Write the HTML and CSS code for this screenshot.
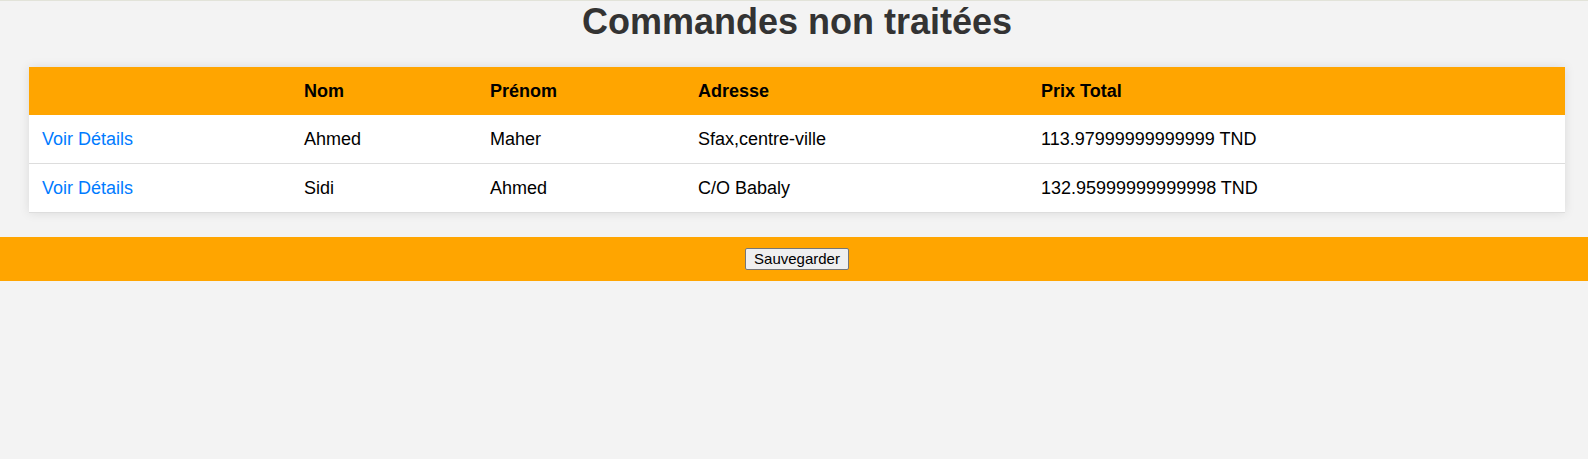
FILE: index.html
```html
<!DOCTYPE html>
<html lang="fr">
<head>
<meta charset="utf-8">
<title>Commandes non traitées</title>
<link rel="stylesheet" href="styles.css">
</head>
<body>
<main class="content">
  <h1 class="page-title">Commandes non traitées</h1>
  <table class="orders">
    <colgroup>
      <col class="c-link">
      <col class="c-nom">
      <col class="c-prenom">
      <col class="c-adresse">
      <col class="c-prix">
    </colgroup>
    <thead>
      <tr>
        <th></th>
        <th>Nom</th>
        <th>Prénom</th>
        <th>Adresse</th>
        <th>Prix Total</th>
      </tr>
    </thead>
    <tbody>
      <tr>
        <td><a class="details" href="#">Voir Détails</a></td>
        <td>Ahmed</td>
        <td>Maher</td>
        <td>Sfax,centre-ville</td>
        <td>113.97999999999999 TND</td>
      </tr>
      <tr>
        <td><a class="details" href="#">Voir Détails</a></td>
        <td>Sidi</td>
        <td>Ahmed</td>
        <td>C/O Babaly</td>
        <td>132.95999999999998 TND</td>
      </tr>
    </tbody>
  </table>
</main>
<div class="save-bar">
  <button class="save-btn" type="button">Sauvegarder</button>
</div>
</body>
</html>
```

FILE: styles.css
```css
html, body {
  margin: 0;
  padding: 0;
}

body {
  background: #f3f3f3;
  border-top: 1px solid #e2e3d9;
  font-family: "Liberation Sans", Arial, sans-serif;
  color: #000;
}

.content {
  display: block;
  margin: 0 23px 24px 29px;
}

.page-title {
  margin: 0 0 25px;
  font-size: 36px;
  line-height: 41px;
  font-weight: bold;
  text-align: center;
  color: #333;
}

.orders {
  width: 100%;
  border-collapse: collapse;
  table-layout: fixed;
  background: #fff;
  box-shadow: 0 0 10px rgba(0, 0, 0, 0.1);
  font-size: 18px;
  line-height: 21px;
}

.c-link { width: 262px; }
.c-nom { width: 186px; }
.c-prenom { width: 208px; }
.c-adresse { width: 343px; }
.c-prix { width: auto; }

.orders th {
  background: #ffa500;
  height: 48px;
  padding: 0 13px;
  text-align: left;
  font-weight: bold;
  box-sizing: border-box;
}

.orders td {
  height: 48px;
  padding: 0 13px;
  text-align: left;
  border-bottom: 1px solid #dddddd;
}

.details {
  color: #007bff;
  text-decoration: none;
}

.save-bar {
  background: #ffa500;
  padding: 11px 0 11px 6px;
  text-align: center;
  line-height: 0;
}

.save-btn {
  font-family: "Liberation Sans", Arial, sans-serif;
  font-size: 15px;
  line-height: 18px;
  height: 22px;
  padding: 1px 8px;
  border: 1px solid #767676;
  border-radius: 2px;
  background: #efefef;
  color: #000;
  box-sizing: border-box;
  vertical-align: top;
}
```
